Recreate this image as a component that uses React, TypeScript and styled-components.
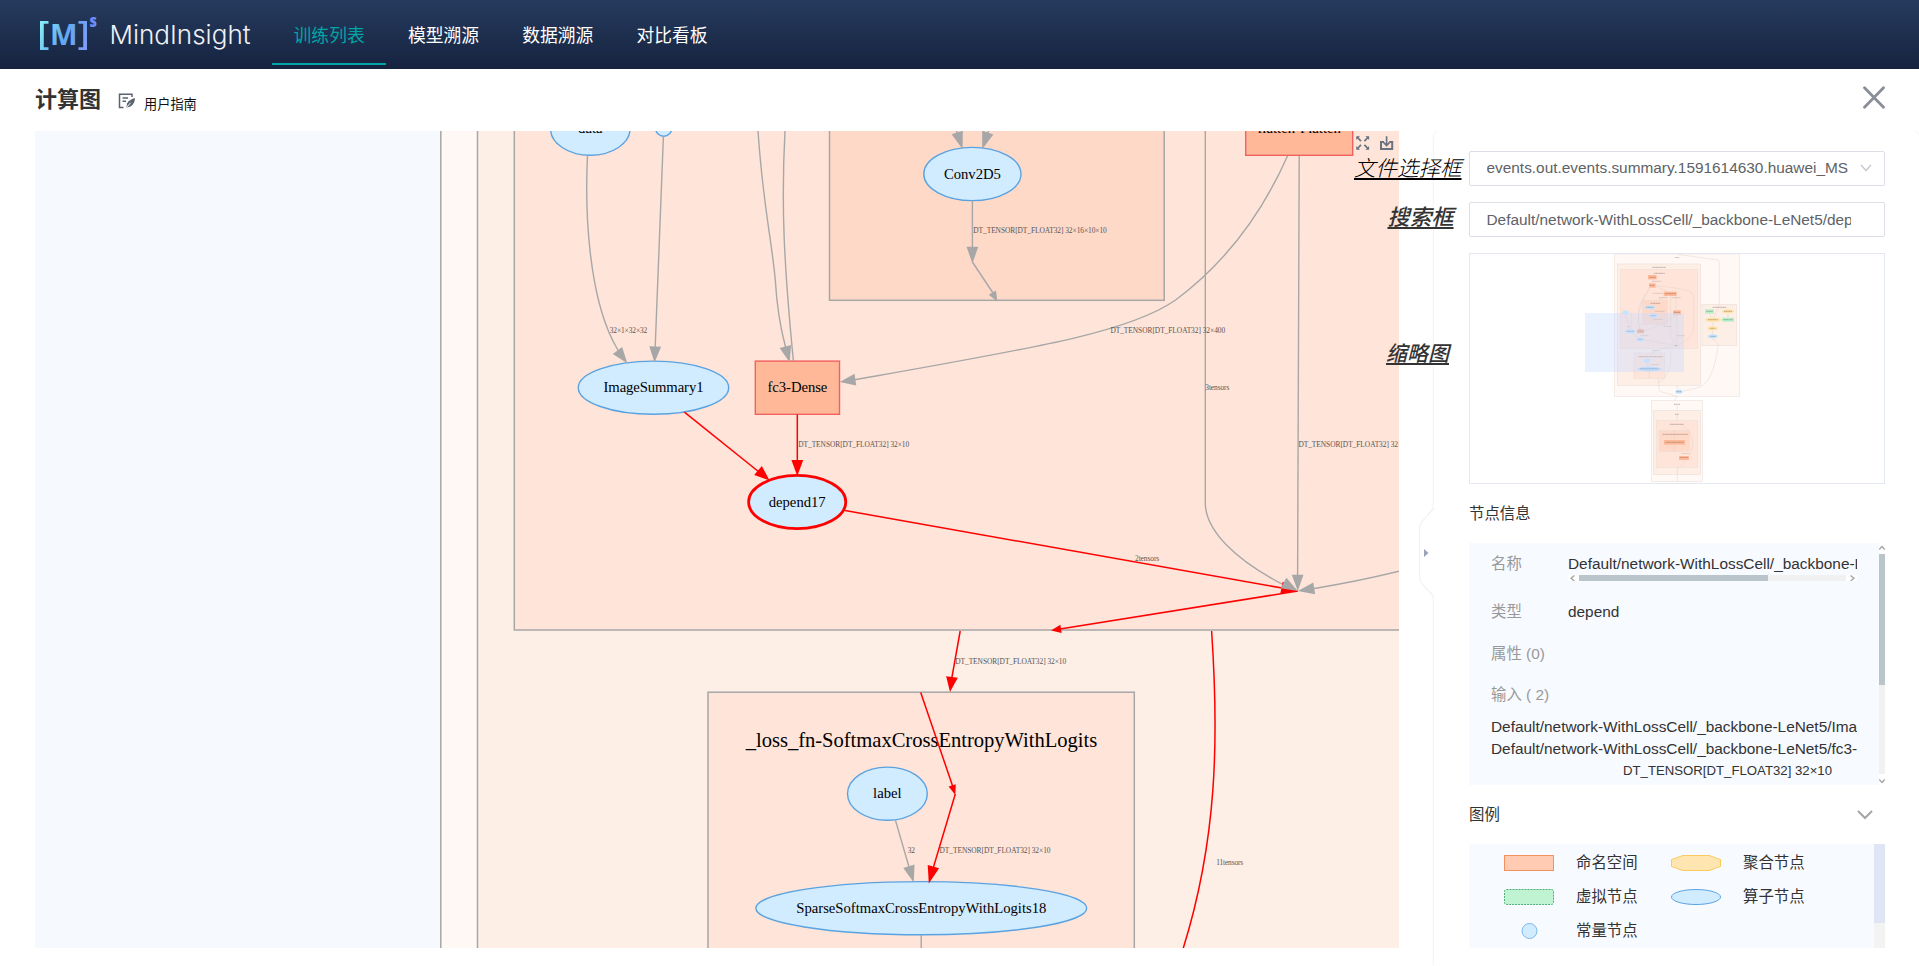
import React from "react";
import styled, { createGlobalStyle, css } from "styled-components";

const cjk = `"Noto Sans CJK SC", sans-serif`;

const GlobalStyle = createGlobalStyle`
  * { box-sizing: border-box; }
  body {
    margin: 0;
    background: #fff;
    color: #333;
    font-family: "Liberation Sans", ${cjk};
    font-size: 15.4px;
    overflow: hidden;
  }
`;

const Page = styled.div`
  width: 1919px;
  height: 966px;
  display: flex;
  flex-direction: column;
  overflow: hidden;
`;

const Header = styled.header`
  height: 69px;
  flex: none;
  display: flex;
  background: linear-gradient(180deg, #263b5e 0%, #16233f 100%);
`;

const Logo = styled.svg`
  width: 272px;
  height: 69px;
  flex: none;
`;

const Nav = styled.nav`
  display: flex;
  height: 65px;
`;

const NavItem = styled.a<{ $active?: boolean }>`
  width: 114.3px;
  display: flex;
  align-items: center;
  justify-content: center;
  padding-top: 5px;
  font-size: 17.8px;
  color: ${(p) => (p.$active ? "#00a5a7" : "#fff")};
  border-bottom: 2px solid ${(p) => (p.$active ? "#00a5a7" : "transparent")};
`;

const TitleBar = styled.div`
  height: 62px;
  flex: none;
  display: flex;
  align-items: center;
  padding: 0 34px 0 35px;
`;

const Title = styled.h1`
  margin: 0;
  font-size: 22px;
  line-height: 30px;
  font-weight: 700;
`;

const GuideIcon = styled.svg`
  width: 18px;
  height: 16px;
  margin: 2px 8px 0 17px;
`;

const GuideLink = styled.span`
  flex: 1;
  font-size: 13.2px;
  font-weight: 400;
  color: #111;
  margin-top: 6px;
`;

const CloseIcon = styled.svg`
  width: 22px;
  height: 23px;
  margin-top: -5px;
`;

const Main = styled.main`
  flex: 1;
  display: flex;
  position: relative;
  padding-left: 35px;
`;

const GraphArea = styled.div`
  width: 1364px;
  height: 817px;
  flex: none;
  background: #f6faff;
`;

const GraphSvg = styled.svg`
  display: block;
  width: 100%;
  height: 100%;
  font-family: "Liberation Serif", serif;
`;

const Side = styled.aside`
  width: 485px;
  margin-left: 35px;
  flex: none;
  display: flex;
  flex-direction: column;
  padding: 20px 34px 0 35px;
  border-radius: 6px 6px 0 0;
  box-shadow: 0 0 3px rgba(0, 0, 0, 0.1);
  background: #fff;
  clip-path: inset(0 0 0 -5px);
`;

const Handle = styled.svg`
  position: absolute;
  left: 1417px;
  top: 374px;
  width: 18px;
  height: 96px;
`;

const fieldBox = css`
  height: 35.2px;
  border: 1px solid #dcdfe6;
  border-radius: 2px;
  display: flex;
  align-items: center;
  color: #606266;
  padding-left: 16.5px;
`;

const SelectBox = styled.div`
  ${fieldBox}
  justify-content: space-between;
  padding-right: 12px;
  padding-bottom: 1.5px;
`;

const SearchBox = styled.div`
  ${fieldBox}
  margin-top: 16px;
  padding-right: 33px;
`;

const FieldText = styled.span`
  white-space: nowrap;
  overflow: hidden;
  line-height: 20px;
`;

const Thumbnail = styled.div`
  height: 230.600px;
  margin-top: 16px;
  border: 1px solid #e4e8f3;
  svg { display: block; width: 100%; height: 100%; }
`;

const SectionTitle = styled.div`
  display: flex;
  justify-content: space-between;
  align-items: center;
  height: 59.200px;
  padding-right: 12px;
`;

const SectionName = styled.span`
  margin-top: -3px;
`;

const InfoBox = styled.div`
  height: 242px;
  display: flex;
  background: #f7faff;
`;

const InfoBody = styled.div`
  flex: 1;
  min-width: 0;
  padding: 10px 22px 0;
  overflow: hidden;
`;

const InfoRow = styled.div<{ $h: number }>`
  display: flex;
  height: ${(p) => p.$h}px;
  line-height: 22px;
`;

const InfoLabel = styled.span`
  width: 77px;
  flex: none;
  color: #999;
  white-space: pre;
`;

const InfoValue = styled.div`
  flex: 1;
  min-width: 0;
  overflow: hidden;
  white-space: nowrap;
`;

const InputLine = styled.div`
  line-height: 22px;
  height: 22px;
  overflow: hidden;
  white-space: nowrap;
`;

const InputType = styled(InputLine)`
  padding-left: 132px;
  font-size: 13.2px;
  height: 21px;
  line-height: 21px;
`;

const HScroll = styled.div`
  height: 6px;
  display: flex;
  background: #fff;
`;

const HTrack = styled.div`
  flex: 1;
  background: #f1f1f1;
`;

const HThumb = styled.div`
  width: 189px;
  height: 6px;
  background: #bac5cb;
`;

const HArrow = styled.svg`
  width: 11px;
  height: 6px;
`;

const VScroll = styled.div`
  width: 6px;
  display: flex;
  flex-direction: column;
  background: #fff;
`;

const VTrack = styled.div`
  flex: 1;
  background: #f1f1f1;
`;

const VThumb = styled.div`
  height: 131px;
  background: #bac5cb;
`;

const VArrow = styled.svg`
  width: 6px;
  height: 11px;
`;

const LegendBox = styled.div`
  height: 104px;
  display: flex;
  background: #f7faff;
`;

const LegendGrid = styled.div`
  flex: 1;
  display: grid;
  grid-template-columns: 167px 167px;
  grid-auto-rows: 34px;
  padding: 1px 0 0 35px;
`;

const LegendItem = styled.div`
  display: flex;
  align-items: center;
  gap: 22px;
  svg { width: 50px; height: 16px; display: block; margin-top: 2px; }
`;

const LegendName = styled.span`
  margin-top: -2px;
`;

const LegendScroll = styled.div`
  width: 11px;
  background: #f3f3f4;
  &::before { content: ""; display: block; height: 79px; background: #dfe5f4; }
`;

const Callout = styled.span<{ $x: number; $y: number; $size: number; $weight: number }>`
  position: absolute;
  left: ${(p) => p.$x}px;
  top: ${(p) => p.$y}px;
  font-size: ${(p) => p.$size}px;
  font-weight: ${(p) => p.$weight};
  color: ${(p) => (p.$weight > 400 ? "#333" : "#000")};
  font-style: italic;
  line-height: 26px;
  white-space: nowrap;
  text-decoration: underline;
  text-decoration-thickness: 1.5px;
  text-underline-offset: 1.5px;
`;

const GRAY = "#a7a7a7";
const RED = "#ff0000";

type Arrow = { at: [number, number]; from: [number, number]; w?: number; c?: string };

function Head({ at, from, w = 5.9, c = GRAY }: Arrow) {
  const dx = at[0] - from[0];
  const dy = at[1] - from[1];
  const n = Math.hypot(dx, dy);
  const px = (-dy / n) * w;
  const py = (dx / n) * w;
  return (
    <polygon
      fill={c}
      points={`${at[0]},${at[1]} ${from[0] + px},${from[1] + py} ${from[0] - px},${from[1] - py}`}
    />
  );
}

function Edge({ d, c = GRAY }: { d: string; c?: string }) {
  return <path d={d} fill="none" stroke={c} strokeWidth={c === RED ? 1.5 : 1.4} />;
}

function Op({ x, y, rx, w, label, selected }: {
  x: number; y: number; rx: number; w: number; label: string; selected?: boolean;
}) {
  return (
    <g>
      <ellipse cx={x} cy={y} rx={rx} ry={26.6} fill="#d1ebff"
        stroke={selected ? RED : "#5aa3e0"} strokeWidth={selected ? 2.8 : 1.4} />
      <text x={x - w / 2} y={y + 4.6} fontSize={14.7} textLength={w}>{label}</text>
    </g>
  );
}

function Scope({ x, y, wd, label, w }: { x: number; y: number; wd: number; label: string; w: number }) {
  return (
    <g>
      <rect x={x - wd / 2} y={y - 26.6} width={wd} height={53.2} fill="#ffb998" stroke="#f2605f" strokeWidth={1.4} />
      <text x={x - w / 2} y={y + 4.6} fontSize={14.7} textLength={w}>{label}</text>
    </g>
  );
}

const edgeLabels: [number, number, number, string][] = [
  [973.3, 233, 133.5, "DT_TENSOR[DT_FLOAT32] 32×16×10×10"],
  [609.7, 333, 37.6, "32×1×32×32"],
  [1110.4, 333, 114.8, "DT_TENSOR[DT_FLOAT32] 32×400"],
  [1205.3, 390, 24, "3tensors"],
  [798.2, 447, 111, "DT_TENSOR[DT_FLOAT32] 32×10"],
  [1298.4, 447, 114.8, "DT_TENSOR[DT_FLOAT32] 32×400"],
  [1135, 561, 24.2, "2tensors"],
  [955.2, 664, 111, "DT_TENSOR[DT_FLOAT32] 32×10"],
  [907.8, 853, 7.2, "32"],
  [939.5, 853, 111, "DT_TENSOR[DT_FLOAT32] 32×10"],
  [1216.2, 865.3, 27, "11tensors"],
];

function Graph() {
  return (
    <GraphSvg viewBox="35 131 1364 817">
      <g stroke={GRAY} strokeWidth={1.5}>
        <rect x={440.8} y={100} width={1200} height={900} fill="#fff8f5" />
        <rect x={477.5} y={100} width={1100} height={900} fill="#fdeee6" />
        <rect x={514.3} y={100} width={1000} height={530} fill="#ffe4d9" />
        <rect x={829.5} y={100} width={334.7} height={200.3} fill="#ffd9c8" />
        <rect x={708} y={692.2} width={426.3} height={300} fill="#ffe4d9" />
      </g>
      <text x={745.8} y={747.3} fontSize={20.6} textLength={351.4}>_loss_fn-SoftmaxCrossEntropyWithLogits</text>

      <Op x={590.3} y={128.7} rx={39.8} w={24.5} label="data" />
      <circle cx={663.7} cy={128} r={8.2} fill="#d1ebff" stroke="#5aa3e0" strokeWidth={1.4} />
      <Op x={653.5} y={387.7} rx={75.2} w={100} label="ImageSummary1" />
      <Scope x={797.4} y={387.7} wd={84.2} w={60} label="fc3-Dense" />
      <Scope x={1299.2} y={128.7} wd={107} w={83.5} label="flatten-Flatten" />
      <Op x={972.4} y={174} rx={48.6} w={57} label="Conv2D5" />
      <Op x={887.4} y={793.7} rx={39.9} w={28.6} label="label" />
      <Op x={921.3} y={908.2} rx={165.4} w={250} label="SparseSoftmaxCrossEntropyWithLogits18" />

      <Edge d="M587.5 155.5 C585 205 587 300 618.5 351" />
      <Head at={[627.3, 363.3]} from={[617.5, 350.5]} />
      <Edge d="M663.4 136.5 L655.2 347" />
      <Head at={[654.5, 362.5]} from={[655.2, 346.4]} />
      <Edge d="M758 131 C763 205 771 235 775.3 280 C777 310 781 330 785.5 347" />
      <Head at={[789.7, 362.5]} from={[785.4, 346.5]} />
      <Edge d="M785 131 C781 205 784 265 793.4 361" />
      <Edge d="M1287.5 156 C1268 200 1236 255 1175.6 300 C1130 332 1040 347 855 379.7" />
      <Head at={[839.7, 382]} from={[855.4, 379.7]} />
      <Edge d="M1205.3 131 V503 C1205.3 530 1235 560 1284 585" />
      <Edge d="M1299.2 156 L1297.6 576" />
      <Edge d="M1399 571.3 Q1355 582 1313 588.7" />
      <Edge d="M972.4 200.8 V248" />
      <Head at={[972.4, 263.5]} from={[972.4, 246.7]} />
      <Edge d="M972.4 262 L993 293" />
      <Head at={[997.4, 301.6]} from={[992.3, 292.6]} w={4.2} />
      <Head at={[962.6, 149.2]} from={[957.2, 132.5]} />
      <Head at={[982.2, 149.2]} from={[987.8, 132.5]} />
      <Edge d="M957.2 133 L956.5 131 M987.8 133 L988.7 131" />
      <Edge d="M895.5 820.4 L909 867" />
      <Head at={[913.8, 882.6]} from={[908.9, 866.2]} />
      <Edge d="M921.2 935 V948" />

      <Edge c={RED} d="M684.4 412.2 L759 472" />
      <Head c={RED} at={[769.6, 480.4]} from={[758, 470.5]} />
      <Edge c={RED} d="M797.3 414.5 V462" />
      <Head c={RED} at={[797.3, 476]} from={[797.3, 460]} />
      <Edge c={RED} d="M845 510.5 L1282 588" />
      <Head c={RED} at={[1297.8, 591]} from={[1281.5, 587.6]} />
      <Edge c={RED} d="M1297.8 591 L1060 629" />
      <Head c={RED} at={[1051, 630.4]} from={[1061, 628.8]} w={4.2} />
      <Edge c={RED} d="M960.2 631 L951.8 678" />
      <Head c={RED} at={[950, 692]} from={[952, 677]} />
      <Edge c={RED} d="M920.7 692.5 L952.6 786" />
      <Head c={RED} at={[955.3, 795]} from={[952.2, 785.3]} w={3.8} />
      <Edge c={RED} d="M955.3 794 L933.5 867" />
      <Head c={RED} at={[928.8, 883.4]} from={[933.4, 866.6]} />
      <Edge c={RED} d="M1211.6 631 C1219 740 1217 840 1183.3 948" />

      <Head at={[1297.8, 591]} from={[1283.5, 583]} />
      <Head at={[1297.8, 591]} from={[1297.6, 574.7]} />
      <Head at={[1297.8, 591]} from={[1314.2, 588.4]} />
      <Op x={797.2} y={502} rx={48.6} w={57} label="depend17" selected />

      <g fill="#555" fontSize={7.4}>
        {edgeLabels.map(([x, y, w, t], i) => (
          <text key={i} x={x} y={y} textLength={w}>{t}</text>
        ))}
      </g>

      <g fill="none" stroke="#68737f" strokeWidth={2}>
        <path
          d="M1357 137 L1361 141.2 M1368.400 137 L1364.400 141.2 M1357 149 L1361 144.800 M1368.400 149 L1364.400 144.800"
          strokeWidth={1.7}
        />
        <path
          d="M1356.300 140 V136.300 H1360 Z M1369.100 140 V136.300 H1365.400 Z M1356.300 146 V149.700 H1360 Z M1369.100 146 V149.700 H1365.400 Z"
          fill="#68737f"
          stroke="none"
        />
        <path d="M1384 142 H1381 V149 H1392.200 V142 H1389.200" />
        <path d="M1386.600 136.200 V145 M1383.800 142.600 L1386.600 145.500 L1389.400 142.600" strokeWidth={1.6} />
      </g>
    </GraphSvg>
  );
}

/* Rows are [x, y, width, height, fill] on the overview grid. */
const miniScopes: [number, number, number, number, string][] = [
  [133, 15, 375, 427, "#fff8f5"],
  [142, 45, 250, 364, "#fdeee6"],
  [151, 61, 232, 238, "#ffe4d9"],
  [217, 153, 76, 74, "#ffd9c8"],
  [192, 312, 92, 77, "#ffe4d9"],
  [396, 166, 104, 124, "#fdeee6"],
  [244, 455, 153, 242, "#fff8f5"],
  [250, 484, 142, 193, "#fdeee6"],
  [259, 514, 124, 142, "#ffe4d9"],
  [267, 544, 92, 64, "#ffd9c8"],
];
const miniBoxes: [number, number, number, number, string][] = [
  [234, 78, 26, 13, "#ffb998"], [237, 103, 20, 13, "#ffb998"], [281, 128, 39, 13, "#ffb998"],
  [309, 184, 24, 13, "#ffb998"], [201, 240, 21, 13, "#ffb998"], [282, 573, 63, 14, "#ffb998"],
  [327, 621, 30, 12, "#ffb998"], [405, 181, 27, 13, "#b9f0cc"], [456, 206, 36, 12, "#b9f0cc"],
];
const miniOps: [number, number, number, string][] = [
  [167, 190, 9, "#c3e5ff"], [240, 175, 15, "#c3e5ff"], [250, 200, 12, "#c3e5ff"],
  [181, 247, 17, "#c3e5ff"], [211, 271, 11, "#c3e5ff"], [231, 335, 9, "#c3e5ff"],
  [238, 360, 36, "#b5dcfc"], [428, 262, 15, "#c3e5ff"], [327, 428, 11, "#c3e5ff"],
  [474, 187, 18, "#ffe2a4"], [429, 212, 25, "#ffe2a4"], [428, 238, 15, "#ffe2a4"],
];
const miniTexts: [number, number, number][] = [
  [315, 25, 13], [247, 55, 41], [252, 73, 32], [238, 85, 19], [239, 109, 15], [285, 134, 33],
  [242, 163, 28], [312, 190, 18], [204, 247, 16], [205, 323, 73], [428, 175, 41], [312, 466, 18],
  [315, 496, 12], [300, 526, 42], [278, 556, 76], [286, 580, 56], [330, 626, 25], [409, 187, 20],
  [460, 212, 28], [462, 187, 24], [414, 212, 30], [420, 238, 16], [420, 262, 17], [170, 247, 22],
  [210, 359, 56], [229, 175, 22], [242, 200, 16], [205, 271, 12], [319, 428, 15], [315, 290, 8],
];
const miniEdgeTexts: [number, number, number][] = [
  [247, 97, 28], [248, 133, 30], [266, 146, 28], [304, 146, 28], [254, 187, 30], [250, 211, 28],
  [171, 233, 8], [280, 232, 24], [211, 260, 25], [320, 260, 24], [246, 305, 23], [241, 347, 26], [334, 614, 24],
];

function Overview() {
  return (
    <svg viewBox="1470 255 414 228.600">
      <g transform="translate(1570 250) scale(0.33333)">
        {miniScopes.map(([x, y, w, h, f], i) => (
          <rect key={i} x={x} y={y} width={w} height={h} fill={f} stroke="#ecdfd9" strokeWidth={1.8} />
        ))}
        <g fill="none" stroke="#dccfca" strokeWidth={1.2}>
          <path d="M322 16 L444 33 Q448 35 448 40 V164 M444 291 Q430 400 388 415 L339 427 M322 409 V420 M322 441 L313 455" />
          <path d="M247 91 V103 M240 116 Q204 160 205 200 Q205 225 210 240 M240 116 Q190 200 210 240 M257 110 Q371 120 371 140 V240 Q365 270 322 290 M257 112 L295 128 M302 141 V250 Q302 275 320 290 M318 141 V184 M318 197 Q290 225 224 245 M320 197 V290 M290 141 L262 153" />
          <path d="M167 197 L178 240 M183 190 V240 M190 253 L205 266 M222 272 L320 290 L268 299 L244 312 M238 367 V388 M302 299 Q310 370 268 402 M265 388 L268 427 L322 442 M232 341 L236 353 M244 180 L248 193 M250 206 L251 219 M474 194 V206 M418 194 L425 206 M429 219 V232 M428 244 V256 M428 269 L448 290 M448 166 L432 206" />
          <path d="M322 470 V485 M322 500 V514 M343 532 Q372 560 368 590 Q365 612 355 621 M313 545 V573 M313 587 V608 M343 633 Q343 648 322 656 V697 M343 532 L334 544" />
        </g>
        {miniBoxes.map(([x, y, w, h, f], i) => (
          <rect key={i} x={x} y={y} width={w} height={h} fill={f} />
        ))}
        {miniOps.map(([x, y, rx, f], i) => (
          <ellipse key={i} cx={x} cy={y} rx={rx} ry={6.5} fill={f} />
        ))}
        <g stroke="#5b4f4b" strokeWidth={2} strokeDasharray="4 1" opacity={0.6}>
          {miniTexts.map(([x, y, w], i) => (
            <path key={i} d={`M${x} ${y} h${w}`} />
          ))}
        </g>
        <g stroke="#9b8b86" strokeWidth={1.6} opacity={0.55}>
          {miniEdgeTexts.map(([x, y, w], i) => (
            <path key={i} d={`M${x} ${y} h${w}`} />
          ))}
        </g>
        <rect x={45} y={192} width={297} height={177} fill="#c8dbff" opacity={0.38} />
      </g>
    </svg>
  );
}

const legend = [
  { label: "命名空间", shape: <rect x={0.5} y={0.5} width={49} height={15} fill="#ffcbb3" stroke="#f5905f" /> },
  { label: "聚合节点", shape: <polygon points="12,0.5 38,0.5 49.5,4.5 49.5,11.5 38,15.5 12,15.5 0.5,11.5 0.5,4.5" fill="#ffe5b0" stroke="#fbc95e" /> },
  { label: "虚拟节点", shape: <rect x={0.5} y={0.5} width={49} height={15} rx={2} fill="#bff3d2" stroke="#4fae77" strokeDasharray="2 1" /> },
  { label: "算子节点", shape: <ellipse cx={25} cy={8} rx={24.5} ry={7.5} fill="#d1ebff" stroke="#5aa3e0" /> },
  { label: "常量节点", shape: <circle cx={25.5} cy={8} r={7.5} fill="#d1ebff" stroke="#7bb9ec" /> },
];

export default function App() {
  return (
    <Page>
      <GlobalStyle />
      <Header>
        <Logo viewBox="0 0 272 69">
          <defs>
            <linearGradient id="mark" x1="40" x2="88" y1="24" y2="46" gradientUnits="userSpaceOnUse">
              <stop offset="0" stopColor="#86eef5" />
              <stop offset="0.5" stopColor="#62a8f2" />
              <stop offset="1" stopColor="#7f9cf8" />
            </linearGradient>
          </defs>
          <path
            d="M40 21 H48.500 V23.800 H43.800 V47.200 H48.500 V50 H40 Z M87 21 H78.500 V23.800 H83.200 V47.200 H78.500 V50 H87 Z"
            fill="url(#mark)"
          />
          <text x={50} y={45} fontFamily="Open Sans" fontWeight={700} fontSize={29} textLength={27.500} lengthAdjust="spacingAndGlyphs" fill="url(#mark)">M</text>
          <text x={89.500} y={27.300} fontFamily="Open Sans" fontWeight={800} fontSize={17} textLength={7.500} lengthAdjust="spacingAndGlyphs" fill="#6d8ef8">s</text>
          <text x={109.500} y={43.500} fontFamily="Inter" fontWeight={300} fontSize={26} textLength={141} lengthAdjust="spacingAndGlyphs" fill="#f0f1f5">MindInsight</text>
        </Logo>
        <Nav>
          <NavItem $active>训练列表</NavItem>
          <NavItem>模型溯源</NavItem>
          <NavItem>数据溯源</NavItem>
          <NavItem>对比看板</NavItem>
        </Nav>
      </Header>

      <TitleBar>
        <Title>计算图</Title>
        <GuideIcon viewBox="0 0 18 16" fill="none" stroke="#5b6270" strokeWidth={1.5}>
          <path d="M14 4 V1.200 H1.500 V14.500 H5.500 M4.500 5 H10 M4.500 8.300 H8" />
          <path d="M8.200 14.800 L9.200 10.200 Q12 6.200 17 5 Q16.800 10.800 12.500 13.400 Z" fill="#5b6270" stroke="none" />
          <path d="M8.200 14.800 L12.600 9.800" stroke="#fff" strokeWidth={1} />
        </GuideIcon>
        <GuideLink>用户指南</GuideLink>
        <CloseIcon viewBox="0 0 22 23" stroke="#8a8e99" strokeWidth={2.8} strokeLinecap="round">
          <path d="M1.500 1.800 L20.500 21.200 M20.500 1.800 L1.500 21.200" />
        </CloseIcon>
      </TitleBar>

      <Main>
        <GraphArea>
          <Graph />
        </GraphArea>
        <Side>
          <SelectBox>
            <FieldText>events.out.events.summary.1591614630.huawei_MS</FieldText>
            <svg width="12" height="8" viewBox="0 0 12 8" fill="none" stroke="#c0c4cc" strokeWidth={1.2}>
              <path d="M1 1 L6 6.500 L11 1" />
            </svg>
          </SelectBox>
          <SearchBox>
            <FieldText>Default/network-WithLossCell/_backbone-LeNet5/depend17</FieldText>
          </SearchBox>
          <Thumbnail>
            <Overview />
          </Thumbnail>
          <SectionTitle><SectionName>节点信息</SectionName></SectionTitle>
          <InfoBox>
            <InfoBody>
              <InfoRow $h={48}>
                <InfoLabel>名称</InfoLabel>
                <InfoValue>
                  <InputLine>Default/network-WithLossCell/_backbone-LeNet5/depend17</InputLine>
                  <HScroll>
                    <HArrow viewBox="0 0 11 6" fill="none" stroke="#a3a3a3" strokeWidth={1.3}>
                      <path d="M6.500 0.500 L3 3.200 L6.500 6" />
                    </HArrow>
                    <HTrack><HThumb /></HTrack>
                    <HArrow viewBox="0 0 11 6" fill="none" stroke="#a3a3a3" strokeWidth={1.3}>
                      <path d="M4.500 0.500 L8 3.200 L4.500 6" />
                    </HArrow>
                  </HScroll>
                </InfoValue>
              </InfoRow>
              <InfoRow $h={42}>
                <InfoLabel>类型</InfoLabel>
                <InfoValue>depend</InfoValue>
              </InfoRow>
              <InfoRow $h={41}><InfoLabel>属性 (0)</InfoLabel></InfoRow>
              <InfoRow $h={32}><InfoLabel>输入 ( 2)</InfoLabel></InfoRow>
              <InputLine>Default/network-WithLossCell/_backbone-LeNet5/ImageSummary1</InputLine>
              <InputLine>Default/network-WithLossCell/_backbone-LeNet5/fc3-Dense</InputLine>
              <InputType>DT_TENSOR[DT_FLOAT32] 32×10</InputType>
            </InfoBody>
            <VScroll>
              <VArrow viewBox="0 0 6 11" fill="none" stroke="#a3a3a3" strokeWidth={1.3}>
                <path d="M0.300 6.500 L3 3.500 L5.700 6.500" />
              </VArrow>
              <VTrack><VThumb /></VTrack>
              <VArrow viewBox="0 0 6 11" fill="none" stroke="#a3a3a3" strokeWidth={1.3}>
                <path d="M0.300 5.500 L3 8.500 L5.700 5.500" />
              </VArrow>
            </VScroll>
          </InfoBox>
          <SectionTitle>
            <SectionName>图例</SectionName>
            <svg width="16" height="10" viewBox="0 0 16 10" fill="none" stroke="#a5a5a5" strokeWidth={2}>
              <path d="M1 1 L8 8 L15 1" />
            </svg>
          </SectionTitle>
          <LegendBox>
            <LegendGrid>
              {legend.map((item) => (
                <LegendItem key={item.label}>
                  <svg viewBox="0 0 50 16">{item.shape}</svg>
                  <LegendName>{item.label}</LegendName>
                </LegendItem>
              ))}
            </LegendGrid>
            <LegendScroll />
          </LegendBox>
        </Side>
        <Handle viewBox="0 0 18 96">
          <path d="M17 3 L4.500 17 Q2.500 20 2.500 23 V71 Q2.500 75 4.500 78 L17 92" fill="#fff" stroke="#f1f2f4" strokeWidth={1.2} />
          <polygon points="7,44 11.500,48 7,52" fill="#9aa3b8" />
        </Handle>
        <Callout $x={1354} $y={25} $size={21.5} $weight={300}>文件选择框</Callout>
        <Callout $x={1387.5} $y={74} $size={22} $weight={500}>搜索框</Callout>
        <Callout $x={1386} $y={210} $size={21} $weight={500}>缩略图</Callout>
      </Main>
    </Page>
  );
}
